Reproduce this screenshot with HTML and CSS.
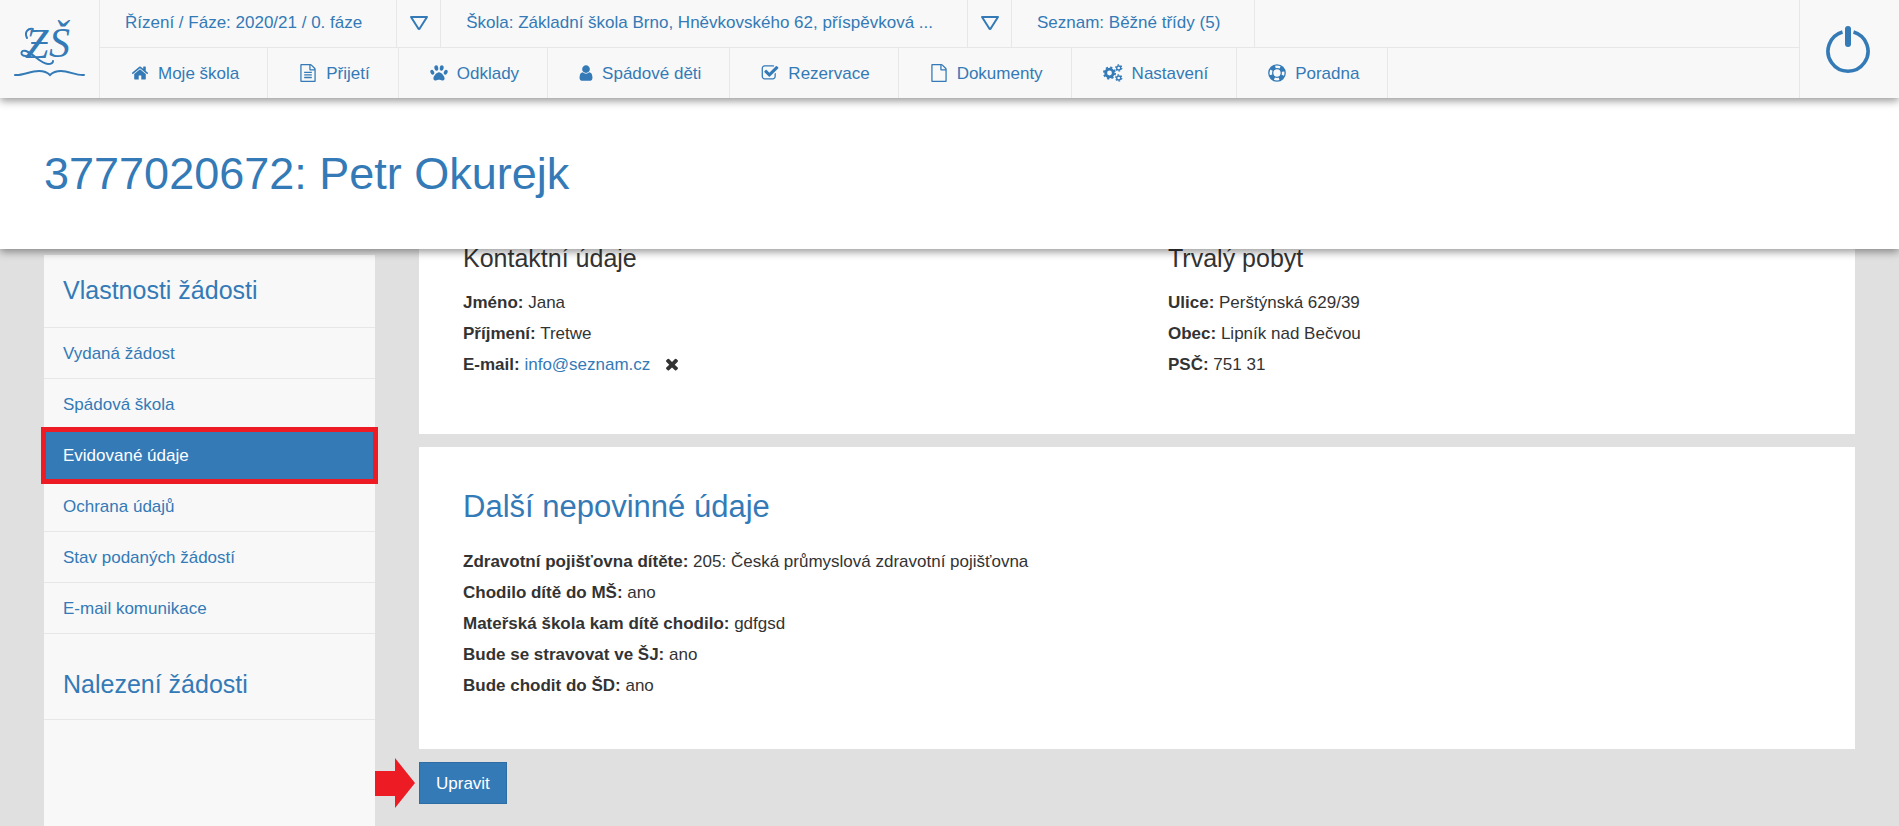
FILE: index.html
```html
<!DOCTYPE html>
<html lang="cs">
<head>
<meta charset="utf-8">
<meta name="viewport" content="width=device-width, initial-scale=1">
<title>3777020672: Petr Okurejk</title>
<link rel="stylesheet" href="styles.css">
</head>
<body>
<header class="topbar">
  <a class="brand" href="#" aria-label="Zápis do škol">
    <svg width="72" height="64" viewBox="0 0 72 64" aria-hidden="true">
      <g class="brand-letters"><text x="11" y="40">Z</text><text x="35" y="39">Š</text></g>
      <path d="M18 25h15M13 20c-3-6 1-10 6-9M12 38c-7 0-5-7 0-5 9 4 15 13 22 13 3 0 5-1 5-3" fill="none" stroke="currentColor" stroke-width="2" stroke-linecap="round"/>
      <path d="M1 57C8 58 16 53 25 53q7 0 11 4 4-4 11-4c8 0 16 5 23 4" fill="none" stroke="currentColor" stroke-width="2" stroke-linecap="round"/>
    </svg>
  </a>
  <div class="bars">
    <nav class="context" aria-label="Kontext">
      <a href="#">Řízení / Fáze: 2020/21 / 0. fáze</a>
      <button class="drop" type="button" aria-label="Vybrat fázi"><svg width="20" height="16" viewBox="0 0 20 16"><path d="M2 2h16l-7 11q-1 2-2 0z"/></svg></button>
      <a href="#">Škola: Základní škola Brno, Hněvkovského 62, příspěvková ...</a>
      <button class="drop" type="button" aria-label="Vybrat školu"><svg width="20" height="16" viewBox="0 0 20 16"><path d="M2 2h16l-7 11q-1 2-2 0z"/></svg></button>
      <a href="#">Seznam: Běžné třídy (5)</a>
    </nav>
    <nav class="menu" aria-label="Hlavní menu">
      <a href="#"><svg class="ico" viewBox="0 0 1792 1792"><path d="M1472 992v480q0 26-19 45t-45 19h-384v-384h-256v384h-384q-26 0-45-19t-19-45v-480q0-1 .5-3t.5-3l575-474 575 474q1 2 1 6zm223-69l-62 74q-8 9-21 11h-3q-13 0-21-7l-692-577-692 577q-12 8-24 7-13-2-21-11l-62-74q-8-10-7-23.5t11-21.5l719-599q32-26 76-26t76 26l244 204v-195q0-14 9-23t23-9h192q14 0 23 9t9 23v408l219 182q10 8 11 21.5t-7 23.5z"/></svg>Moje škola</a>
      <a href="#"><svg class="ico" viewBox="0 0 1792 1792"><path d="M1596 380q28 28 48 76t20 88v1152q0 40-28 68t-68 28h-1344q-40 0-68-28t-28-68v-1600q0-40 28-68t68-28h896q40 0 88 20t76 48zm-444-244v376h376q-10-29-22-41l-313-313q-12-12-41-22zm384 1528v-1024h-416q-40 0-68-28t-28-68v-416h-768v1536h1280zm-1024-864q0-14 9-23t23-9h704q14 0 23 9t9 23v64q0 14-9 23t-23 9h-704q-14 0-23-9t-9-23v-64zm736 224q14 0 23 9t9 23v64q0 14-9 23t-23 9h-704q-14 0-23-9t-9-23v-64q0-14 9-23t23-9h704zm0 256q14 0 23 9t9 23v64q0 14-9 23t-23 9h-704q-14 0-23-9t-9-23v-64q0-14 9-23t23-9h704z"/></svg>Přijetí</a>
      <a href="#"><svg class="ico" viewBox="0 0 18 18"><ellipse cx="6.3" cy="4" rx="2" ry="2.8" transform="rotate(-10 6.3 4)"/><ellipse cx="11.7" cy="4" rx="2" ry="2.8" transform="rotate(10 11.7 4)"/><ellipse cx="2.3" cy="8.2" rx="1.8" ry="2.5" transform="rotate(-25 2.3 8.2)"/><ellipse cx="15.7" cy="8.2" rx="1.8" ry="2.5" transform="rotate(25 15.7 8.2)"/><path d="M9 8.3c2.400 0 5.600 3.900 5.600 6.200 0 1.500-1.100 2-2.400 2-1.200 0-2-.7-3.200-.7s-2 .7-3.200.7c-1.300 0-2.400-.5-2.400-2 0-2.300 3.200-6.200 5.600-6.200z"/></svg>Odklady</a>
      <a href="#"><svg class="ico slim" viewBox="256 0 1280 1792"><path d="M1536 1399q0 109-62.5 187t-150.5 78h-854q-88 0-150.5-78t-62.500-187q0-85 8.500-160.500t31.500-152 58.500-131 94-89 134.500-34.500q131 128 313 128t313-128q76 0 134.500 34.500t94 89 58.500 131 31.500 152 8.500 160.500zm-256-887q0 159-112.500 271.500t-271.500 112.500-271.500-112.500-112.500-271.500 112.500-271.500 271.500-112.500 271.500 112.500 112.500 271.500z"/></svg>Spádové děti</a>
      <a href="#"><svg class="ico" viewBox="0 0 1792 1792"><path d="M1472 930v318q0 119-84.500 203.500t-203.500 84.500h-832q-119 0-203.500-84.500t-84.500-203.500v-832q0-119 84.500-203.500t203.500-84.500h832q63 0 117 25 15 7 18 23 3 17-9 29l-49 49q-10 10-23 10-3 0-9-2-23-6-45-6h-832q-66 0-113 47t-47 113v832q0 66 47 113t113 47h832q66 0 113-47t47-113v-254q0-13 9-22l64-64q10-10 23-10 6 0 12 3 20 8 20 29zm231-489l-814 814q-24 24-57 24t-57-24l-430-430q-24-24-24-57t24-57l110-110q24-24 57-24t57 24l263 263 647-647q24-24 57-24t57 24l110 110q24 24 24 57t-24 57z"/></svg>Rezervace</a>
      <a href="#"><svg class="ico" viewBox="0 0 1792 1792"><path d="M1596 380q28 28 48 76t20 88v1152q0 40-28 68t-68 28h-1344q-40 0-68-28t-28-68v-1600q0-40 28-68t68-28h896q40 0 88 20t76 48zm-444-244v376h376q-10-29-22-41l-313-313q-12-12-41-22zm384 1528v-1024h-416q-40 0-68-28t-28-68v-416h-768v1536h1280z"/></svg>Dokumenty</a>
      <a href="#"><svg class="ico wide" viewBox="0 0 20 18"><g fill="none" stroke="currentColor"><circle cx="6.500" cy="9" r="3.800" stroke-width="2.800"/><circle cx="6.500" cy="9" r="5.600" stroke-width="1.800" stroke-dasharray="2.200 2.198"/><circle cx="15.700" cy="4" r="2" stroke-width="1.400"/><circle cx="15.700" cy="4" r="3.100" stroke-width="1.200" stroke-dasharray="1.623 1.623"/><circle cx="15.700" cy="14" r="2" stroke-width="1.400"/><circle cx="15.700" cy="14" r="3.100" stroke-width="1.200" stroke-dasharray="1.623 1.623"/></g></svg>Nastavení</a>
      <a href="#"><svg class="ico" viewBox="0 0 18 18"><g fill="none" stroke="currentColor"><circle cx="9" cy="9" r="8.200" stroke-width="1.300"/><circle cx="9" cy="9" r="4.300" stroke-width="1.300"/><circle cx="9" cy="9" r="6.200" stroke-width="4" stroke-dasharray="4.870 4.870" stroke-dashoffset="-2.435"/></g></svg>Poradna</a>
    </nav>
  </div>
  <button class="power" type="button" aria-label="Odhlásit">
    <svg width="46" height="50" viewBox="0 0 46 50"><path d="M17.500 8A20 20 0 1 0 28.500 8" fill="none" stroke="currentColor" stroke-width="3.600"/><path d="M23 5v15" stroke="currentColor" stroke-width="6" stroke-linecap="round"/></svg>
  </button>
</header>
<div class="titlebar"><h1>3777020672: Petr Okurejk</h1></div>
<div class="page">
  <aside class="sidebar">
    <h2>Vlastnosti žádosti</h2>
    <nav aria-label="Vlastnosti žádosti">
      <a href="#">Vydaná žádost</a>
      <a href="#">Spádová škola</a>
      <a href="#" class="active" aria-current="page">Evidované údaje</a>
      <a href="#">Ochrana údajů</a>
      <a href="#">Stav podaných žádostí</a>
      <a href="#">E-mail komunikace</a>
    </nav>
    <h2 class="second">Nalezení žádosti</h2>
  </aside>
  <main class="content">
    <section class="card contact">
      <div>
        <h3>Kontaktní údaje</h3>
        <p><b>Jméno:</b> Jana</p>
        <p><b>Příjmení:</b> Tretwe</p>
        <p><b>E-mail:</b> <a href="#">info@seznam.cz</a><svg class="cross" viewBox="0 0 1792 1792" role="img" aria-label="Neověřeno"><path d="M1490 1322q0 40-28 68l-136 136q-28 28-68 28t-68-28l-294-294-294 294q-28 28-68 28t-68-28l-136-136q-28-28-28-68t28-68l294-294-294-294q-28-28-28-68t28-68l136-136q28-28 68-28t68 28l294 294 294-294q28-28 68-28t68 28l136 136q28 28 28 68t-28 68l-294 294 294 294q28 28 28 68z"/></svg></p>
      </div>
      <div>
        <h3>Trvalý pobyt</h3>
        <p><b>Ulice:</b> Perštýnská 629/39</p>
        <p><b>Obec:</b> Lipník nad Bečvou</p>
        <p><b>PSČ:</b> 751 31</p>
      </div>
    </section>
    <section class="card">
      <h2>Další nepovinné údaje</h2>
      <p><b>Zdravotní pojišťovna dítěte:</b> 205: Česká průmyslová zdravotní pojišťovna</p>
      <p><b>Chodilo dítě do MŠ:</b> ano</p>
      <p><b>Mateřská škola kam dítě chodilo:</b> gdfgsd</p>
      <p><b>Bude se stravovat ve ŠJ:</b> ano</p>
      <p><b>Bude chodit do ŠD:</b> ano</p>
    </section>
    <div class="actions">
      <button class="primary" type="button">Upravit</button>
      <svg class="arrow" width="40" height="50" viewBox="0 0 40 50" aria-hidden="true"><path d="M0 13h20V0l20 25-20 25V38H0z"/></svg>
    </div>
  </main>
</div>
</body>
</html>
```
FILE: styles.css
```css
* { box-sizing: border-box; }
body {
  margin: 0;
  min-height: 100vh;
  display: flex;
  flex-direction: column;
  background: #e0e0e0;
  color: #333;
  font: 17px/25px "Liberation Sans", Arial, sans-serif;
}
a { color: #337ab7; text-decoration: none; }
h1, h2, h3, p { margin: 0; font-weight: 400; }
b { font-weight: 700; }
button { font: inherit; cursor: pointer; border: 0; background: none; padding: 0; color: #337ab7; }
svg { fill: currentColor; flex: none; }

.topbar {
  position: relative;
  z-index: 3;
  display: flex;
  background: #f8f8f8;
  color: #337ab7;
  box-shadow: 0 3px 8px rgba(0, 0, 0, .4);
}
.brand { width: 100px; padding: 18px 0 0 14px; border-right: 1px solid #e7e7e7; }
.brand-letters { font: italic 42px "Liberation Serif", serif; }
.bars { flex: 1; min-width: 0; }
.context, .menu { display: flex; }
.context { height: 48px; border-bottom: 1px solid #e7e7e7; }
.menu { height: 50px; }
.context > *, .menu > * { display: flex; align-items: center; border-right: 1px solid #e7e7e7; white-space: nowrap; }
.context > a { padding: 0 34px 3px 25px; }
.drop { justify-content: center; width: 44px; padding-bottom: 2px; }
.drop path { fill: none; stroke: currentColor; stroke-width: 2; stroke-linejoin: round; }
.menu > a { gap: 9px; padding: 0 28px 0 31px; }
.ico { width: 18px; height: 18px; }
.slim { width: 14px; }
.wide { width: 20px; }
.power { width: 100px; padding-right: 3px; border-left: 1px solid #e7e7e7; }
.power svg { display: block; margin: 0 auto; }

.titlebar {
  position: relative;
  z-index: 2;
  padding: 44px 44px 43px;
  background: #fff;
  box-shadow: 0 3px 8px rgba(0, 0, 0, .4);
}
h1 { font-size: 45px; line-height: 64px; color: #337ab7; }

.page { flex: 1; display: flex; gap: 44px; padding: 0 44px; }
.sidebar { width: 331px; flex: none; margin-top: 6px; background: #f8f8f8; }
.sidebar h2 {
  padding: 21px 19px 23px;
  border-bottom: 1px solid #e7e7e7;
  font-size: 25px;
  line-height: 28px;
  color: #337ab7;
}
.sidebar .second { padding-top: 36px; padding-bottom: 21px; }
.sidebar a { display: block; padding: 13px 19px 12px; border-bottom: 1px solid #e7e7e7; }
.sidebar .active {
  position: relative;
  background: #337ab7;
  color: #fff;
  outline: 5px solid #ed1c24;
  outline-offset: -2px;
}

.content { flex: 1; min-width: 0; padding-bottom: 20px; }
.card { padding: 42px 44px 45px; margin-bottom: 13px; background: #fff; }
.card p { margin-bottom: 6px; }
.card h2 { margin-bottom: 24px; font-size: 31px; line-height: 36px; color: #337ab7; }
.contact { display: grid; grid-template-columns: 1fr 1fr; gap: 62px; padding-top: 0; padding-bottom: 51px; }
.card h3 { margin-bottom: 23px; font-size: 25px; line-height: 18px; }
.cross { width: 18px; height: 18px; margin-left: 13px; vertical-align: -3px; }
.actions { position: relative; }
.primary { height: 42px; padding: 0 16px; border: 1px solid #2e6da4; background: #337ab7; color: #fff; }
.arrow { position: absolute; left: -44px; top: -4px; color: #ed1c24; }
```
